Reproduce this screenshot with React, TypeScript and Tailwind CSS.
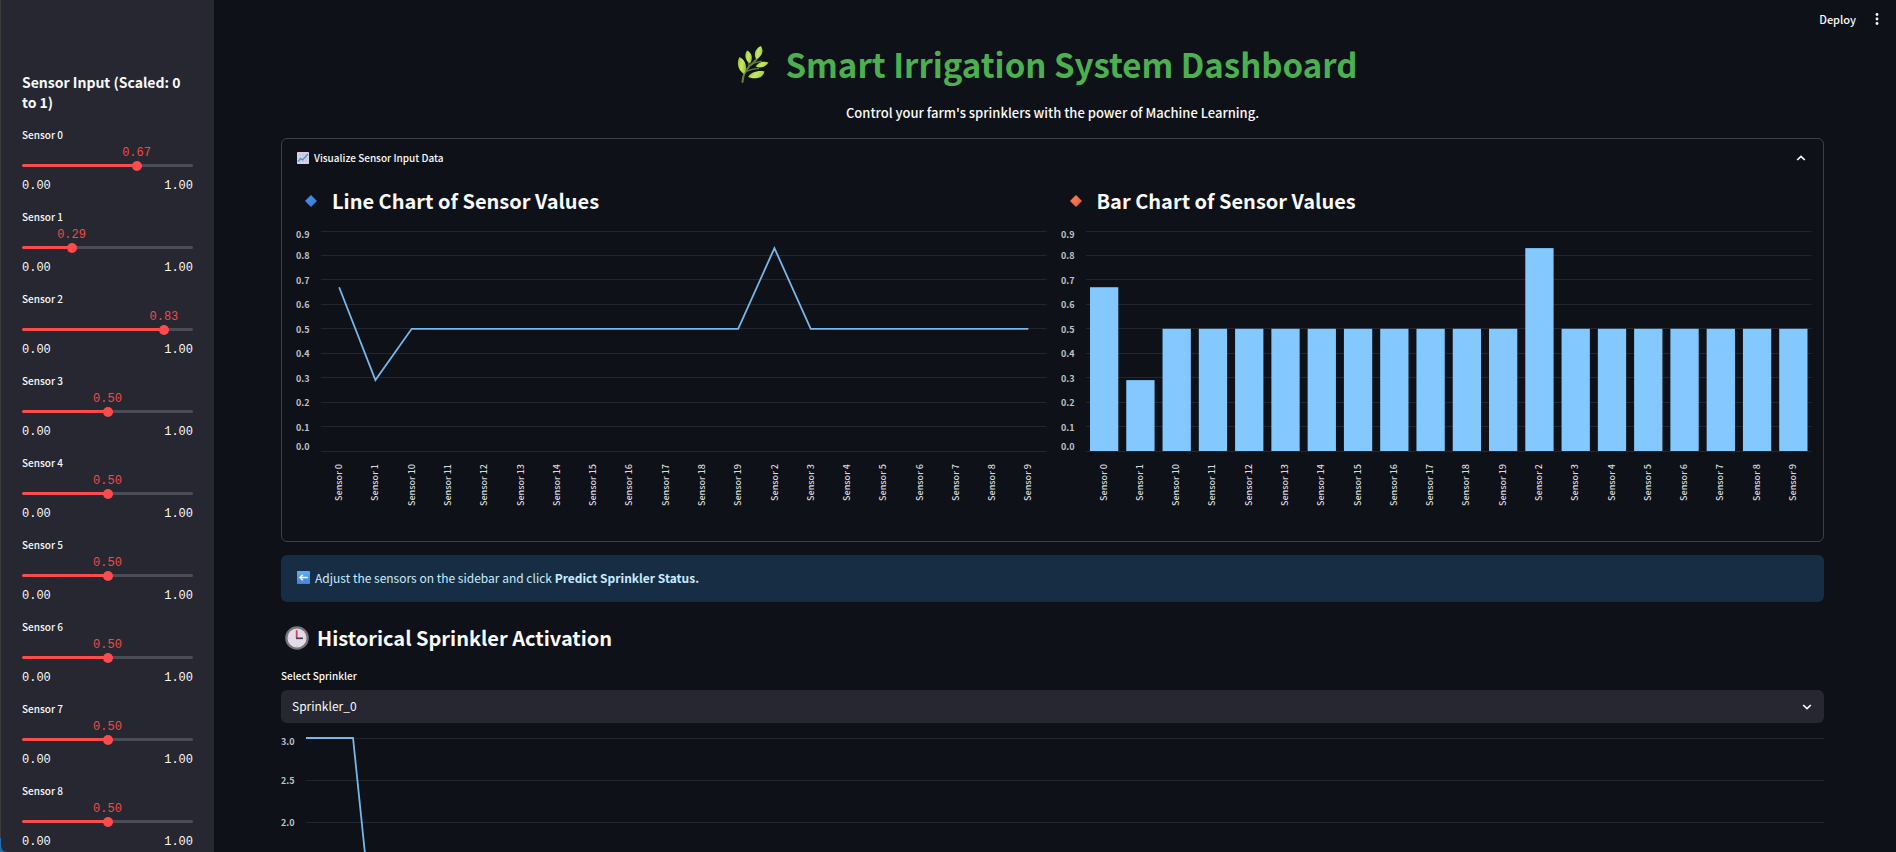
import { useState } from "react";
import { clsx } from "clsx";

const SENSOR_COUNT = 20;
const initialValues = Array.from({ length: SENSOR_COUNT }, (_, i) =>
  i === 0 ? 0.67 : i === 1 ? 0.29 : i === 2 ? 0.83 : 0.5,
);

// The charts sort sensors by name: 0, 1, 10, 11, ..., 19, 2, 3, ...
const chartOrder = Array.from({ length: SENSOR_COUNT }, (_, i) => i).sort((a, b) =>
  String(a) < String(b) ? -1 : 1,
);

const BLUE = "#83c9ff";
const GRID = "#23262e";

function HerbIcon() {
  return (
    <svg viewBox="0 0 36 38" className="h-[38px] w-9 shrink-0" aria-hidden="true">
      <defs>
        <linearGradient id="leaf" x1="0" y1="0" x2="1" y2="0.3">
          <stop offset="0" stopColor="#8fb83a" />
          <stop offset="0.55" stopColor="#c6ea62" />
          <stop offset="1" stopColor="#a5cc45" />
        </linearGradient>
      </defs>
      <path d="M7.5 37 C8 27 13 22 19 17 C23 13 25.500 9 26.500 6" fill="none" stroke="#5f7f4a" strokeWidth="2" strokeLinecap="round" />
      <path d="M14 21 C14 18 13 16 12.500 14 M9 28 C14 24 19 24 24 23.500 M16 20 C20 17 24 17 27 16" fill="none" stroke="#5f7f4a" strokeWidth="1.300" />
      <path d="M4.500 12 C1.500 17 2.500 25 9 29 C12.500 24 11.500 15 4.500 12Z" fill="url(#leaf)" />
      <path d="M12 5.500 C9 10 10 15 15 18.500 C18 14 17.500 8 12 5.500Z" fill="url(#leaf)" />
      <path d="M26 1 C20 3.500 18.500 9 21 14 C27 12 29 6 26 1Z" fill="url(#leaf)" />
      <path d="M33.500 17.500 C28.500 15.500 23.500 17 20.500 21.500 C25.500 24 30.500 22 33.500 17.500Z" fill="url(#leaf)" />
      <path d="M29.500 26.500 C23 25 15.500 27.500 13 32 C19 34.500 27.500 34 29.500 26.500Z" fill="url(#leaf)" />
    </svg>
  );
}

function ChartIcon() {
  return (
    <svg viewBox="0 0 12 12" className="size-3 shrink-0" aria-hidden="true">
      <rect width="12" height="12" rx="0.800" fill="#dcd5e6" />
      <path d="M3 0V12M6 0V12M9 0V12M0 3H12M0 6H12M0 9H12" stroke="#bdb4cc" strokeWidth="0.500" />
      <path d="M1 9.500L3.500 6.500L5.500 8L11 2" fill="none" stroke="#3a8fd8" strokeWidth="1.200" />
    </svg>
  );
}

function Diamond({ from, to, id }: { from: string; to: string; id: string }) {
  return (
    <svg viewBox="0 0 12 12" className="size-3 shrink-0" aria-hidden="true">
      <defs>
        <linearGradient id={id} x1="0" y1="0" x2="1" y2="1">
          <stop offset="0" stopColor={from} />
          <stop offset="1" stopColor={to} />
        </linearGradient>
      </defs>
      <path d="M6 0.300L11.700 6L6 11.700L0.300 6Z" fill={`url(#${id})`} stroke={`url(#${id})`} strokeWidth="0.500" strokeLinejoin="round" />
    </svg>
  );
}

function LeftArrowIcon() {
  return (
    <svg viewBox="0 0 13 13" className="size-[13px] shrink-0" aria-hidden="true">
      <defs>
        <linearGradient id="arrow-tile" x1="0" y1="0" x2="0" y2="1">
          <stop offset="0" stopColor="#54b2f8" />
          <stop offset="1" stopColor="#4a7ee0" />
        </linearGradient>
      </defs>
      <rect width="13" height="13" rx="0.800" fill="url(#arrow-tile)" />
      <path d="M10.800 6.500H3M5.800 3.700L3 6.500L5.800 9.300" fill="none" stroke="#f4f4fb" strokeWidth="1.600" />
    </svg>
  );
}

function ClockIcon() {
  return (
    <svg viewBox="0 0 24 24" className="size-6 shrink-0" aria-hidden="true">
      <circle cx="12" cy="12" r="11.800" fill="#7a757c" />
      <circle cx="12" cy="12" r="9.500" fill="#e3dde6" />
      <g fill="#a9a2ae">
        <circle cx="12" cy="4" r="0.500" />
        <circle cx="12" cy="20" r="0.500" />
        <circle cx="4" cy="12" r="0.500" />
        <circle cx="20" cy="12" r="0.500" />
      </g>
      <path d="M11.700 4.300V12" stroke="#dd3a63" strokeWidth="1.800" />
      <path d="M11 12.300H18" stroke="#45404f" strokeWidth="1.700" />
    </svg>
  );
}

function Chevron({ up, className }: { up?: boolean; className?: string }) {
  return (
    <svg viewBox="0 0 10 6" className={clsx("h-1.5 w-2.5 shrink-0", className)} aria-hidden="true">
      <path d={up ? "M1.200 5L5 1.400L8.800 5" : "M1.200 1L5 4.600L8.800 1"} fill="none" stroke="#fafafa" strokeWidth="1.700" />
    </svg>
  );
}

function SensorSlider({ index, value, onChange }: { index: number; value: number; onChange: (v: number) => void }) {
  const id = `sensor-${index}`;
  const pct = value * 100;
  return (
    <div>
      <label htmlFor={id} className="block h-4 text-[10px] leading-4 font-medium">
        Sensor {index}
      </label>
      <div className="font-['Liberation_Mono',monospace] text-xs">
        <div className="relative h-4 text-[#f14a4b]">
          <output htmlFor={id} className="absolute -translate-x-1/2 leading-5" style={{ left: `${pct}%` }}>
            {value.toFixed(2)}
          </output>
        </div>
        <div className="h-4 pt-[5px]">
          <div
            className="relative h-[3px] w-full rounded-full"
            style={{ background: `linear-gradient(to right, #ff4b4b ${pct}%, #4b4c57 ${pct}%)` }}
          >
            <input
              id={id}
              type="range"
              min={0}
              max={1}
              step={0.01}
              value={value}
              onChange={(e) => onChange(Number(e.target.value))}
              className="absolute -inset-x-[5px] -top-1 h-[11px] w-auto min-w-[calc(100%+10px)] cursor-pointer appearance-none bg-transparent [&::-webkit-slider-thumb]:size-2.5 [&::-webkit-slider-thumb]:appearance-none [&::-webkit-slider-thumb]:rounded-full [&::-webkit-slider-thumb]:bg-[#ff4b4b]"
            />
          </div>
        </div>
        <div className="flex h-5 items-center justify-between pt-px">
          <span>0.00</span>
          <span>1.00</span>
        </div>
      </div>
    </div>
  );
}

function YAxis({ ticks, height }: { ticks: number[]; height: number }) {
  return (
    <svg className="w-[25px] shrink-0 overflow-visible" height={height} aria-hidden="true">
      {ticks.map((t, i) => {
        const y = (i * height) / (ticks.length - 1);
        const shift = i === 0 ? 7 : i === ticks.length - 1 ? -1 : 4;
        return (
          <text key={t} x="0" y={Math.round(y + shift)} className="fill-[#bfc1c7] text-[9px] font-bold">
            {t.toFixed(1)}
          </text>
        );
      })}
    </svg>
  );
}

function GridLines({ count, height }: { count: number; height: number }) {
  return (
    <>
      {Array.from({ length: count + 1 }, (_, i) => {
        const y = Math.floor((i * height) / count) + 0.5;
        return <line key={i} x1="0" x2="100%" y1={y} y2={y} stroke={GRID} />;
      })}
    </>
  );
}

function Line({ points, height, width }: { points: number[][]; height: number; width: number }) {
  return (
    <svg viewBox={`0 0 ${width} ${height}`} width="100%" height={height} preserveAspectRatio="none" className="overflow-visible">
      <polyline
        points={points.map((p) => p.join(",")).join(" ")}
        fill="none"
        stroke={BLUE}
        strokeWidth="1.8"
        strokeOpacity="0.9"
        vectorEffect="non-scaling-stroke"
      />
    </svg>
  );
}

const PLOT_HEIGHT = 220;
const sensorTicks = [0.9, 0.8, 0.7, 0.6, 0.5, 0.4, 0.3, 0.2, 0.1, 0];

function SensorChart({ kind, values }: { kind: "line" | "bar"; values: number[] }) {
  const y = (v: number) => PLOT_HEIGHT * (1 - v / 0.9);
  return (
    <div className="mt-4 flex">
      <YAxis ticks={sensorTicks} height={PLOT_HEIGHT} />
      <div className="min-w-0 flex-1">
        <svg width="100%" height={PLOT_HEIGHT} className="block overflow-visible" role="img" aria-label={`Sensor values, ${kind} chart`}>
          <GridLines count={9} height={PLOT_HEIGHT} />
          {kind === "line" ? (
            <Line
              width={SENSOR_COUNT}
              height={PLOT_HEIGHT}
              points={chartOrder.map((s, i) => [i + 0.5, y(values[s])])}
            />
          ) : (
            chartOrder.map((s, i) => (
              <rect
                key={s}
                x={`${i * 5 + 0.55}%`}
                width="3.9%"
                y={y(values[s])}
                height={PLOT_HEIGHT - y(values[s])}
                fill={BLUE}
              />
            ))
          )}
        </svg>
        <div className="mt-[13px] flex h-[49px] items-start">
          {chartOrder.map((s) => (
            <div key={s} className="flex flex-1 justify-center">
              <span className="rotate-180 text-[9px] leading-3 font-medium whitespace-nowrap text-[#d8dade] [writing-mode:vertical-rl]">
                Sensor {s}
              </span>
            </div>
          ))}
        </div>
      </div>
    </div>
  );
}

export default function App() {
  const [values, setValues] = useState(initialValues);
  const [open, setOpen] = useState(true);
  const setValue = (i: number, v: number) => setValues((old) => old.map((o, j) => (j === i ? v : o)));

  return (
    <div className="flex h-screen overflow-hidden bg-[#0e1117] font-['Noto_Sans_CJK_SC','Noto_Sans',sans-serif] text-[#fafafa]">
      <aside className="w-[214px] shrink-0 bg-[linear-gradient(to_top,#1f6fb0_14px,#3a3d3a_14px)] pl-px">
        <div className="h-full overflow-y-auto rounded-bl-md bg-[#262730] pt-[72px] pr-[21px] pb-8 pl-[21px] [scrollbar-width:none]">
          <h2 className="text-sm leading-5 font-bold">Sensor Input (Scaled: 0 to 1)</h2>
          <div className="mt-[15px] flex flex-col gap-3.5">
            {values.map((v, i) => (
              <SensorSlider key={i} index={i} value={v} onChange={(n) => setValue(i, n)} />
            ))}
          </div>
        </div>
      </aside>

      <main className="min-w-0 flex-1 overflow-y-auto pr-[72px] pb-16 pl-[67px] [scrollbar-width:none]">
        <header className="-mr-[59px] flex h-[38px] items-center justify-end gap-[15px]">
          <button type="button" className="text-[11px] leading-4 font-medium">Deploy</button>
          <button type="button" aria-label="Main menu" className="flex h-6 w-3 items-center justify-center">
            <svg viewBox="0 0 4 12" className="h-3 w-1" fill="#fafafa" aria-hidden="true">
              <circle cx="2" cy="1.500" r="1.400" />
              <circle cx="2" cy="6" r="1.400" />
              <circle cx="2" cy="10.500" r="1.400" />
            </svg>
          </button>
        </header>

        <h1 className="flex h-[52px] items-center justify-center gap-3.5 pr-3 text-[33px] leading-[52px] font-bold text-[#4caf50]">
          <HerbIcon />
          Smart Irrigation System Dashboard
        </h1>
        <p className="mt-[13px] text-center text-[13px] leading-5 font-medium">
          Control your farm's sprinklers with the power of Machine Learning.
        </p>

        <section className="mt-[15px] rounded-md border border-[#3d4045]">
          <button
            type="button"
            aria-expanded={open}
            onClick={() => setOpen(!open)}
            className="flex h-[38px] w-full items-center gap-[5px] pr-[17px] pl-[15px] text-[10px] leading-4 font-medium"
          >
            <ChartIcon />
            Visualize Sensor Input Data
            <Chevron up={open} className="ml-auto" />
          </button>
          {open && (
            <div className="grid grid-cols-2 gap-3.5 pt-2.5 pr-3 pb-7 pl-3.5">
              <div>
                <h3 className="flex h-7 items-center gap-[15px] pl-[9px] text-xl leading-7 font-bold">
                  <Diamond id="blue-diamond" from="#4a95ea" to="#3b78d4" />
                  Line Chart of Sensor Values
                </h3>
                <SensorChart kind="line" values={values} />
              </div>
              <div>
                <h3 className="flex h-7 items-center gap-[15px] pl-[9px] text-xl leading-7 font-bold">
                  <Diamond id="orange-diamond" from="#ff8a45" to="#e85555" />
                  Bar Chart of Sensor Values
                </h3>
                <SensorChart kind="bar" values={values} />
              </div>
            </div>
          )}
        </section>

        <div role="status" className="mt-[13px] flex h-[47px] items-center gap-[5px] rounded-md bg-[#172d43] px-4 pb-0.5 text-xs leading-5 text-[#c7ebff]">
          <LeftArrowIcon />
          <p>
            Adjust the sensors on the sidebar and click <strong className="font-bold">Predict Sprinkler Status.</strong>
          </p>
        </div>

        <h3 className="mt-[22px] flex h-7 items-center gap-2 pl-1 text-xl leading-7 font-bold">
          <ClockIcon />
          Historical Sprinkler Activation
        </h3>
        <label htmlFor="sprinkler" className="mt-4 block text-[10px] leading-4 font-medium">
          Select Sprinkler
        </label>
        <div className="relative mt-1.5">
          <select id="sprinkler" className="block h-[33px] w-full appearance-none rounded-md bg-[#262730] px-[11px] pb-0.5 text-xs leading-5">
            {Array.from({ length: 3 }, (_, i) => (
              <option key={i}>{`Sprinkler_${i}`}</option>
            ))}
          </select>
          <Chevron className="pointer-events-none absolute top-3.5 right-3" />
        </div>

        <div className="mt-[15px] flex">
          <YAxis ticks={[3, 2.5, 2, 1.5, 1, 0.5, 0]} height={252} />
          <svg height={252} className="block min-w-0 flex-1 overflow-visible" role="img" aria-label="Sprinkler activation history">
            <GridLines count={6} height={252} />
            <Line width={1517} height={252} points={[[0, 0], [47, 0], [73, 252], [1517, 252]]} />
          </svg>
        </div>
      </main>
    </div>
  );
}
